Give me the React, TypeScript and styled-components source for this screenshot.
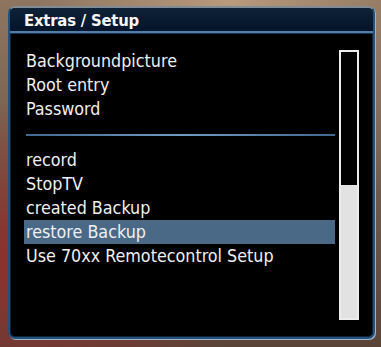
import React from "react";
import styled, { createGlobalStyle } from "styled-components";

const GlobalStyle = createGlobalStyle`
  html, body {
    margin: 0;
    padding: 0;
  }
  body {
    width: 381px;
    height: 347px;
    overflow: hidden;
    font-family: "DejaVu Sans Condensed", "DejaVu Sans", sans-serif;
  }
`;

const Screen = styled.div`
  width: 381px;
  height: 347px;
  box-sizing: border-box;
  padding: 6px 6px 8px 8px;
  background:
    radial-gradient(ellipse at 8% 75%, rgba(150, 40, 40, 0.85), transparent 45%),
    radial-gradient(ellipse at 60% 0%, #b89a7c, transparent 60%),
    linear-gradient(180deg, #8e7560 0%, #6e5a4a 55%, #5a4438 100%);
`;

const Panel = styled.div`
  height: 100%;
  box-sizing: border-box;
  display: flex;
  flex-direction: column;
  background: #000;
  border: 2px solid #24507a;
  border-top-color: #7f8c96;
  border-radius: 7px;
  box-shadow: inset 0 0 0 1px #0c2238, 1px 1px 0 #9ab4cc;
  overflow: hidden;
`;

const TitleBar = styled.div`
  height: 25px;
  display: flex;
  align-items: center;
  padding: 1px 0 0 14px;
  box-sizing: border-box;
  background: linear-gradient(180deg, #0e2238 0%, #04142a 100%);
  border-bottom: 2px solid #4f7ea8;
  box-shadow: 0 1px 0 #16344f;
  color: #f6f6f6;
  font-weight: bold;
  font-size: 16.5px;
  letter-spacing: -0.2px;
`;

const Body = styled.div`
  flex: 1;
  display: flex;
  align-items: flex-start;
  padding: 16px 14px 12px 14px;
  gap: 4px;
`;

const List = styled.div`
  flex: 1;
  display: flex;
  flex-direction: column;
`;

const Item = styled.div<{ $selected?: boolean }>`
  height: 24px;
  line-height: 24px;
  padding-left: 2px;
  font-size: 17.75px;
  color: #f0f0f0;
  white-space: nowrap;
  background: ${(p) => (p.$selected ? "#4a6987" : "transparent")};
`;

const Separator = styled.div`
  height: 27px;
  display: flex;
  align-items: center;
  padding-left: 2px;

  &::after {
    content: "";
    flex: 1;
    height: 2px;
    background: linear-gradient(90deg, #3d6a94, #6f9cc4 50%, #3d6a94);
  }
`;

const ScrollTrack = styled.div`
  width: 20px;
  height: 270px;
  margin-top: 1px;
  box-sizing: border-box;
  border: 2px solid #ececec;
  display: flex;
  flex-direction: column;
  justify-content: flex-end;
`;

const ScrollThumb = styled.div<{ $size: number }>`
  height: ${(p) => p.$size}%;
  background: #e2e2e2;
`;

const topItems = ["Backgroundpicture", "Root entry", "Password"];
const bottomItems = [
  "record",
  "StopTV",
  "created Backup",
  "restore Backup",
  "Use 70xx Remotecontrol Setup",
];

export default function App() {
  const selected = "restore Backup";

  return (
    <>
      <GlobalStyle />
      <Screen>
        <Panel>
          <TitleBar>Extras / Setup</TitleBar>
          <Body>
            <List>
              {topItems.map((item) => (
                <Item key={item}>{item}</Item>
              ))}
              <Separator />
              {bottomItems.map((item) => (
                <Item key={item} $selected={item === selected}>
                  {item}
                </Item>
              ))}
            </List>
            <ScrollTrack>
              <ScrollThumb $size={50} />
            </ScrollTrack>
          </Body>
        </Panel>
      </Screen>
    </>
  );
}
